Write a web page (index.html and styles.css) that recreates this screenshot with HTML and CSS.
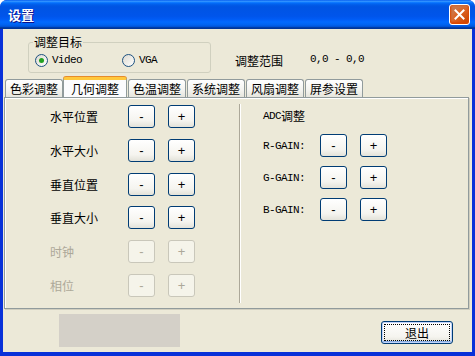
FILE: index.html
```html
<!DOCTYPE html>
<html lang="zh">
<head>
    <meta charset="UTF-8">
    <title>设置</title>
    <link rel="stylesheet" href="styles.css">
</head>
<body>

<div class="window">
    <div class="titlebar">
        <span class="title">设置</span>
        <button class="close" aria-label="关闭">
            <svg width="11" height="11" viewBox="0 0 11 11">
                <path d="M1.5 1.5 L9.5 9.5 M9.5 1.5 L1.5 9.5" stroke="#fff" stroke-width="2" stroke-linecap="square"/>
            </svg>
        </button>
    </div>

    <div class="client">
        <div class="top">
            <fieldset class="group">
                <legend>调整目标</legend>
                <label class="radio radio-first"><span class="dot checked"></span><span class="latin">Video</span></label>
                <label class="radio"><span class="dot"></span><span class="latin">VGA</span></label>
            </fieldset>
            <span class="range-label">调整范围</span>
            <span class="range-value latin">0,0 - 0,0</span>
        </div>

        <div class="tabs">
            <div class="tab first">色彩调整</div>
            <div class="tab selected">几何调整</div>
            <div class="tab">色温调整</div>
            <div class="tab">系统调整</div>
            <div class="tab">风扇调整</div>
            <div class="tab">屏参设置</div>
        </div>

        <div class="panel">
            <div class="col left">
                <div class="row"><span class="label">水平位置</span><button class="btn">-</button><button class="btn">+</button></div>
                <div class="row"><span class="label">水平大小</span><button class="btn">-</button><button class="btn">+</button></div>
                <div class="row"><span class="label">垂直位置</span><button class="btn">-</button><button class="btn">+</button></div>
                <div class="row"><span class="label">垂直大小</span><button class="btn">-</button><button class="btn">+</button></div>
                <div class="row off"><span class="label">时钟</span><button class="btn" disabled>-</button><button class="btn" disabled>+</button></div>
                <div class="row off"><span class="label">相位</span><button class="btn" disabled>-</button><button class="btn" disabled>+</button></div>
            </div>
            <div class="col right">
                <div class="adc"><span class="latin">ADC</span>调整</div>
                <div class="row"><span class="label latin">R-GAIN:</span><button class="btn">-</button><button class="btn">+</button></div>
                <div class="row"><span class="label latin">G-GAIN:</span><button class="btn">-</button><button class="btn">+</button></div>
                <div class="row"><span class="label latin">B-GAIN:</span><button class="btn">-</button><button class="btn">+</button></div>
            </div>
        </div>

        <div class="bottom">
            <div class="status"></div>
            <button class="btn exit">退出</button>
        </div>
    </div>
</div>

</body>
</html>
```

FILE: styles.css
```css
body {
    margin: 0;
    background: #fff;
    font-family: "Noto Sans CJK SC", "Liberation Sans", sans-serif;
    font-size: 12px;
    color: #000;
}
.latin {
    font-family: "Liberation Mono", "DejaVu Sans Mono", monospace;
    font-size: 11px;
    letter-spacing: -0.6px;
}
.window {
    width: 475px;
    height: 356px;
    box-sizing: border-box;
    display: flex;
    flex-direction: column;
    background: #0831d9;
    border-radius: 7px 7px 0 0;
    overflow: hidden;
}
.titlebar {
    height: 29px;
    flex: none;
    display: flex;
    align-items: center;
    padding: 0 5px 0 8px;
    background: linear-gradient(to bottom, #0058ee 0%, #3593ff 4%, #288eff 6%, #127dff 8%, #036ffc 10%, #0262ee 14%, #0057e5 20%, #0054e3 24%, #0055eb 56%, #005bf5 66%, #026afe 76%, #0062ef 86%, #0052d6 92%, #0040ab 94%, #003092 100%);
}
.title {
    color: #fff;
    font-weight: bold;
    font-size: 13px;
    text-shadow: 1px 1px #0f1089;
}
.close {
    margin-left: auto;
    width: 21px;
    height: 21px;
    padding: 0;
    display: flex;
    align-items: center;
    justify-content: center;
    border: 1px solid #fff;
    border-radius: 3px;
    background: radial-gradient(circle at 90% 90%, #cc4600 0%, #dc6527 55%, #cd7546 70%), #e0573f;
    box-shadow: inset 0 -1px 2px 1px #da4600;
}
.client {
    flex: 1;
    margin: 0 3px 4px 3px;
    background: #ece9d8;
    display: flex;
    flex-direction: column;
}
.top {
    height: 48px;
    display: flex;
    align-items: flex-start;
}
.group {
    margin: 6px 0 0 25px;
    width: 183px;
    box-sizing: border-box;
    padding: 4px 6px 5px 6px;
    border: 1px solid #d0d0bf;
    border-radius: 3px;
    display: flex;
    align-items: center;
}
.group legend {
    padding: 0 1px;
    margin-left: -2px;
    line-height: 14px;
    font-size: 12px;
}
.radio {
    display: flex;
    align-items: center;
    height: 14px;
    gap: 4px;
}
.radio-first {
    width: 87px;
}
.dot {
    width: 11px;
    height: 11px;
    border: 1px solid #1c5180;
    border-radius: 50%;
    background: linear-gradient(135deg, #dcd9cf, #fff);
    display: flex;
    align-items: center;
    justify-content: center;
}
.dot.checked::after {
    content: "";
    width: 5px;
    height: 5px;
    border-radius: 50%;
    background: #21a121;
}
.range-label {
    margin: 23px 0 0 24px;
}
.range-value {
    margin: 24px 0 0 27px;
}
.tabs {
    height: 20px;
    display: flex;
    align-items: flex-end;
    padding-left: 2px;
    position: relative;
    z-index: 1;
}
.tab {
    width: 58px;
    height: 18px;
    box-sizing: border-box;
    margin-right: 1px;
    border: 1px solid #919b9c;
    border-bottom: none;
    border-radius: 3px 3px 0 0;
    background: linear-gradient(to bottom, #fff, #f3f3ef 60%, #e6e5dd);
    text-align: center;
    line-height: 17px;
    font-size: 12px;
}
.tab.selected {
    width: 64px;
    height: 20px;
    margin: 0 1px 0 -1px;
    border-top: 3px solid #ffc83c;
    box-shadow: 0 -1px #e68b2c;
    background: #fcfcfe;
    line-height: 17px;
}
.panel {
    margin: 0 3px 0 1px;
    height: 212px;
    box-sizing: border-box;
    border: 1px solid #919b9c;
    box-shadow: inset 1px 1px #fff, 1px 1px #d0cebf;
    display: flex;
    padding: 6px 0 5px 0;
}
.col {
    display: flex;
    flex-direction: column;
}
.left {
    width: 235px;
    padding: 1px 0 0 45px;
    box-sizing: border-box;
    border-right: 1px solid #aca899;
    box-shadow: 1px 0 #fff;
    gap: 10.8px;
}
.right {
    padding: 0 0 0 23px;
}
.row {
    display: flex;
    align-items: center;
    height: 23px;
}
.left .label {
    width: 78px;
}
.right .label {
    width: 57px;
}
.right .row {
    margin-bottom: 9px;
}
.adc {
    height: 23px;
    margin: 0 0 7px;
    display: flex;
    align-items: center;
}
.btn {
    width: 27px;
    height: 23px;
    padding: 0;
    margin-right: 13px;
    border: 1px solid #003c74;
    border-radius: 3px;
    background: linear-gradient(to bottom, #fff, #f5f4ef 70%, #e3e2d9);
    font-family: "Liberation Sans", sans-serif;
    font-size: 13px;
    color: #000;
    line-height: 19px;
}
.btn:disabled {
    border-color: #c9c7ba;
    background: #f5f4ea;
    color: #aca899;
}
.off .label {
    color: #aca899;
}
.bottom {
    flex: 1;
    display: flex;
    align-items: flex-start;
}
.status {
    width: 121px;
    height: 33px;
    margin: 5px 0 0 56px;
    background: #d4d0c8;
}
.exit {
    width: 72px;
    height: 23px;
    margin: 12px 0 0 201px;
    font-family: "Noto Sans CJK SC", sans-serif;
    font-size: 12px;
    box-shadow: inset 0 0 0 1px #c1d3fb, inset 0 -2px #89ade4;
    outline: 1px dotted #000;
    outline-offset: -4px;
}
```
